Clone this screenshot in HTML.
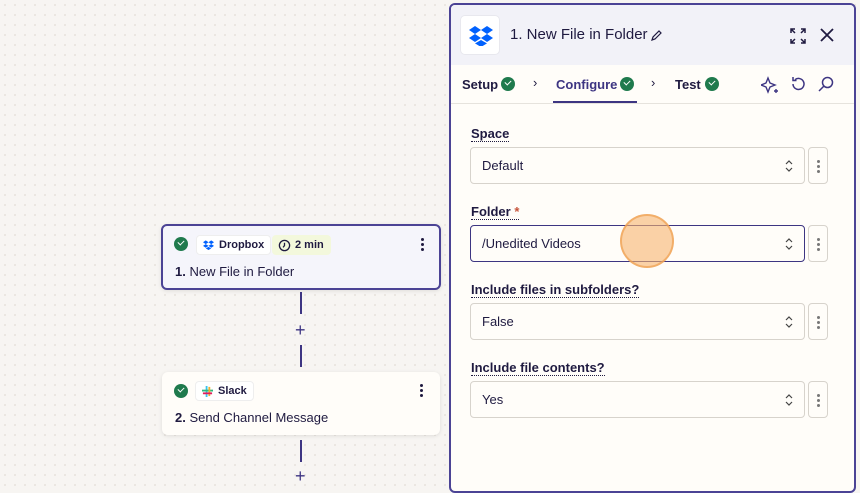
<!DOCTYPE html>
<html><head><style>
*{box-sizing:border-box;margin:0;padding:0}
body{width:860px;height:481px;overflow:hidden;font-family:"Liberation Sans",sans-serif;color:#1f1a40;background:#f7f5f2;background-image:radial-gradient(#e2ddd6 0.7px,transparent 1px);background-size:10px 10px;position:relative}
.card{position:absolute;border-radius:6px;background:#fffdf9;box-shadow:0 1px 4px rgba(0,0,0,.1)}
.chk{position:absolute;width:14px;height:14px;border-radius:50%;background:#1f7a4d}
.chk:after{content:"";position:absolute;left:4px;top:3px;width:5px;height:3px;border-left:1.7px solid #fff;border-bottom:1.7px solid #fff;transform:rotate(-45deg)}
.pill{position:absolute;height:20px;border-radius:4px;background:#fff;border:1px solid #eee;font-size:11px;font-weight:bold;line-height:18px;padding-left:22px;padding-right:6px;color:#1f1a40}
.dots{position:absolute;width:3px;height:3px;border-radius:50%;background:#1f1a40;box-shadow:0 5px 0 #1f1a40,0 10px 0 #1f1a40}
.line{position:absolute;left:300px;width:2px;background:#3d3582}
.plus{position:absolute;left:295px;font-size:18px;color:#3d3582;line-height:12px}
.panel{position:absolute;left:449px;top:3px;width:407px;height:490px;border:2px solid #4b4395;border-radius:6px;background:#fffdf9;overflow:hidden}
.hdr{height:60px;background:#f2f2f8;position:relative}
.tabs{height:39px;border-bottom:1px solid #e6e3dd;position:relative;font-size:13px;font-weight:bold}
.lbl{position:absolute;left:20px;font-size:13px;font-weight:bold;color:#1f1a40;border-bottom:1px dotted #1f1a40;line-height:15px}
.inp{position:absolute;left:19px;width:335px;height:37px;border:1px solid #d7d3cc;border-radius:4px;background:#fffdf9;font-size:13px;line-height:35px;padding-left:11px;color:#1f1a40}
.inp .ud{position:absolute;right:11px;top:11px;width:8px;height:14px}
.kb{position:absolute;left:357px;width:20px;height:37px;border:1px solid #d7d3cc;border-radius:4px}
.kb i{position:absolute;left:8px;top:12px;width:3px;height:3px;border-radius:50%;background:#777;box-shadow:0 5px 0 #777,0 10px 0 #777}
</style></head><body>
<div class="card" style="left:161px;top:224px;width:280px;height:66px;border:2px solid #4b4395;background:#f5f5fb">
 <div class="chk" style="left:11px;top:11px"></div>
 <div class="pill" style="left:33px;top:9px">Dropbox<svg style="position:absolute;left:6px;top:4px" width="11" height="10" viewBox="0 0 12 10"><path fill="#0061fe" d="M3 0L0 2l3 2 3-2zM9 0L6 2l3 2 3-2zM0 6l3 2 3-2-3-2zM9 4L6 6l3 2 3-2zM3 8.7L6 10.5 9 8.7 6 7z"/></svg></div>
 <div class="pill" style="left:109px;top:9px;background:#f3f8dc;border-color:#f3f8dc">2 min<svg style="position:absolute;left:5px;top:3px" width="13" height="13" viewBox="0 0 14 14"><circle cx="7" cy="7" r="5.5" fill="none" stroke="#1f1a40" stroke-width="1.4"/><path d="M7 4v3l-1.5 2" fill="none" stroke="#1f1a40" stroke-width="1.4"/></svg></div>
 <div class="dots" style="left:258px;top:12px"></div>
 <div style="position:absolute;left:12px;top:38px;font-size:13px"><b>1.</b> New File in Folder</div>
</div>
<div class="line" style="top:292px;height:22px"></div>
<div class="plus" style="top:324px">+</div>
<div class="line" style="top:345px;height:22px"></div>
<div class="card" style="left:162px;top:372px;width:278px;height:63px">
 <div class="chk" style="left:12px;top:12px"></div>
 <div class="pill" style="left:33px;top:9px">Slack<svg style="position:absolute;left:6px;top:4px" width="11" height="11" viewBox="0 0 12 12"><rect x="4" y="0" width="2" height="12" fill="#36c5f0"/><rect x="0" y="4" width="12" height="2" fill="#2eb67d"/><rect x="7" y="1" width="2" height="10" fill="#ecb22e"/><rect x="1" y="7" width="10" height="2" fill="#e01e5a"/></svg></div>
 <div class="dots" style="left:258px;top:12px"></div>
 <div style="position:absolute;left:13px;top:38px;font-size:13px"><b>2.</b> Send Channel Message</div>
</div>
<div class="line" style="top:440px;height:22px"></div>
<div class="plus" style="top:470px">+</div>

<div class="panel">
 <div class="hdr">
  <div style="position:absolute;left:9px;top:10px;width:40px;height:40px;background:#fff;border-radius:5px;border:1px solid #e8e8ee">
   <svg style="position:absolute;left:8px;top:10px" width="24" height="20" viewBox="0 0 12 10"><path fill="#0061fe" d="M3 0L0 2l3 2 3-2zM9 0L6 2l3 2 3-2zM0 6l3 2 3-2-3-2zM9 4L6 6l3 2 3-2zM3 8.7L6 10.5 9 8.7 6 7z"/></svg>
  </div>
  <div style="position:absolute;left:59px;top:21px;font-size:15px">1. New File in Folder</div>
  <svg style="position:absolute;left:199px;top:24px" width="13" height="13" viewBox="0 0 13 13"><path d="M2 11l1-3 6-6 2 2-6 6z" fill="none" stroke="#1f1a40" stroke-width="1.2"/></svg>
  <svg style="position:absolute;left:339px;top:23px" width="16" height="16" viewBox="0 0 16 16" fill="none" stroke="#1f1a40" stroke-width="1.5"><path d="M1 5V1h4M11 1h4v4M15 11v4h-4M5 15H1v-4M1 1l4 4M15 1l-4 4M15 15l-4-4M1 15l4-4"/></svg>
  <svg style="position:absolute;left:369px;top:23px" width="14" height="14" viewBox="0 0 14 14" stroke="#1f1a40" stroke-width="1.8"><path d="M1 1l12 12M13 1L1 13"/></svg>
 </div>
 <div class="tabs">
  <div style="position:absolute;left:11px;top:12px">Setup</div><div class="chk" style="left:50px;top:12px"></div>
  <div style="position:absolute;left:82px;top:10px;font-weight:normal">›</div>
  <div style="position:absolute;left:105px;top:12px;color:#3d3582">Configure</div><div class="chk" style="left:169px;top:12px"></div>
  <div style="position:absolute;left:102px;top:36px;width:84px;height:2px;background:#3d3582"></div>
  <div style="position:absolute;left:200px;top:10px;font-weight:normal">›</div>
  <div style="position:absolute;left:224px;top:12px">Test</div><div class="chk" style="left:254px;top:12px"></div>
  <svg style="position:absolute;left:310px;top:11px" width="18" height="18" viewBox="0 0 18 18" fill="none" stroke="#3d3582" stroke-width="1.4"><path d="M7 2l2 5 5 2-5 2-2 5-2-5-5-2 5-2z"/><path d="M15 13v4M13 15h4"/></svg>
  <svg style="position:absolute;left:339px;top:11px" width="16" height="16" viewBox="0 0 16 16" fill="none" stroke="#3d3582" stroke-width="1.5"><path d="M3 8a5.5 5.5 0 1 0 2-4.3M3 1v3.5h3.5"/></svg>
  <svg style="position:absolute;left:367px;top:11px" width="16" height="16" viewBox="0 0 16 16" fill="none" stroke="#3d3582" stroke-width="1.5"><circle cx="9.5" cy="6.5" r="5"/><path d="M6 10l-5 5"/></svg>
 </div>
 <div class="lbl" style="top:121px">Space</div>
 <div class="inp" style="top:142px">Default<svg class="ud" viewBox="0 0 8 14" fill="none" stroke="#444" stroke-width="1.2"><path d="M1 5l3-3 3 3M1 9l3 3 3-3"/></svg></div>
 <div class="kb" style="top:142px"><i></i></div>
 <div class="lbl" style="top:199px">Folder <span style="color:#c6533a;border:none">*</span></div>
 <div class="inp" style="top:220px;border-color:#3d3582">/Unedited Videos<svg class="ud" viewBox="0 0 8 14" fill="none" stroke="#444" stroke-width="1.2"><path d="M1 5l3-3 3 3M1 9l3 3 3-3"/></svg></div>
 <div class="kb" style="top:220px"><i></i></div>
 <div class="lbl" style="top:277px">Include files in subfolders?</div>
 <div class="inp" style="top:298px">False<svg class="ud" viewBox="0 0 8 14" fill="none" stroke="#444" stroke-width="1.2"><path d="M1 5l3-3 3 3M1 9l3 3 3-3"/></svg></div>
 <div class="kb" style="top:298px"><i></i></div>
 <div class="lbl" style="top:355px">Include file contents?</div>
 <div class="inp" style="top:376px">Yes<svg class="ud" viewBox="0 0 8 14" fill="none" stroke="#444" stroke-width="1.2"><path d="M1 5l3-3 3 3M1 9l3 3 3-3"/></svg></div>
 <div class="kb" style="top:376px"><i></i></div>
 <div style="position:absolute;left:169px;top:209px;width:54px;height:54px;border-radius:50%;background:rgba(247,180,110,.6);border:2px solid rgba(240,160,80,.7)"></div>
</div>
</body></html>
